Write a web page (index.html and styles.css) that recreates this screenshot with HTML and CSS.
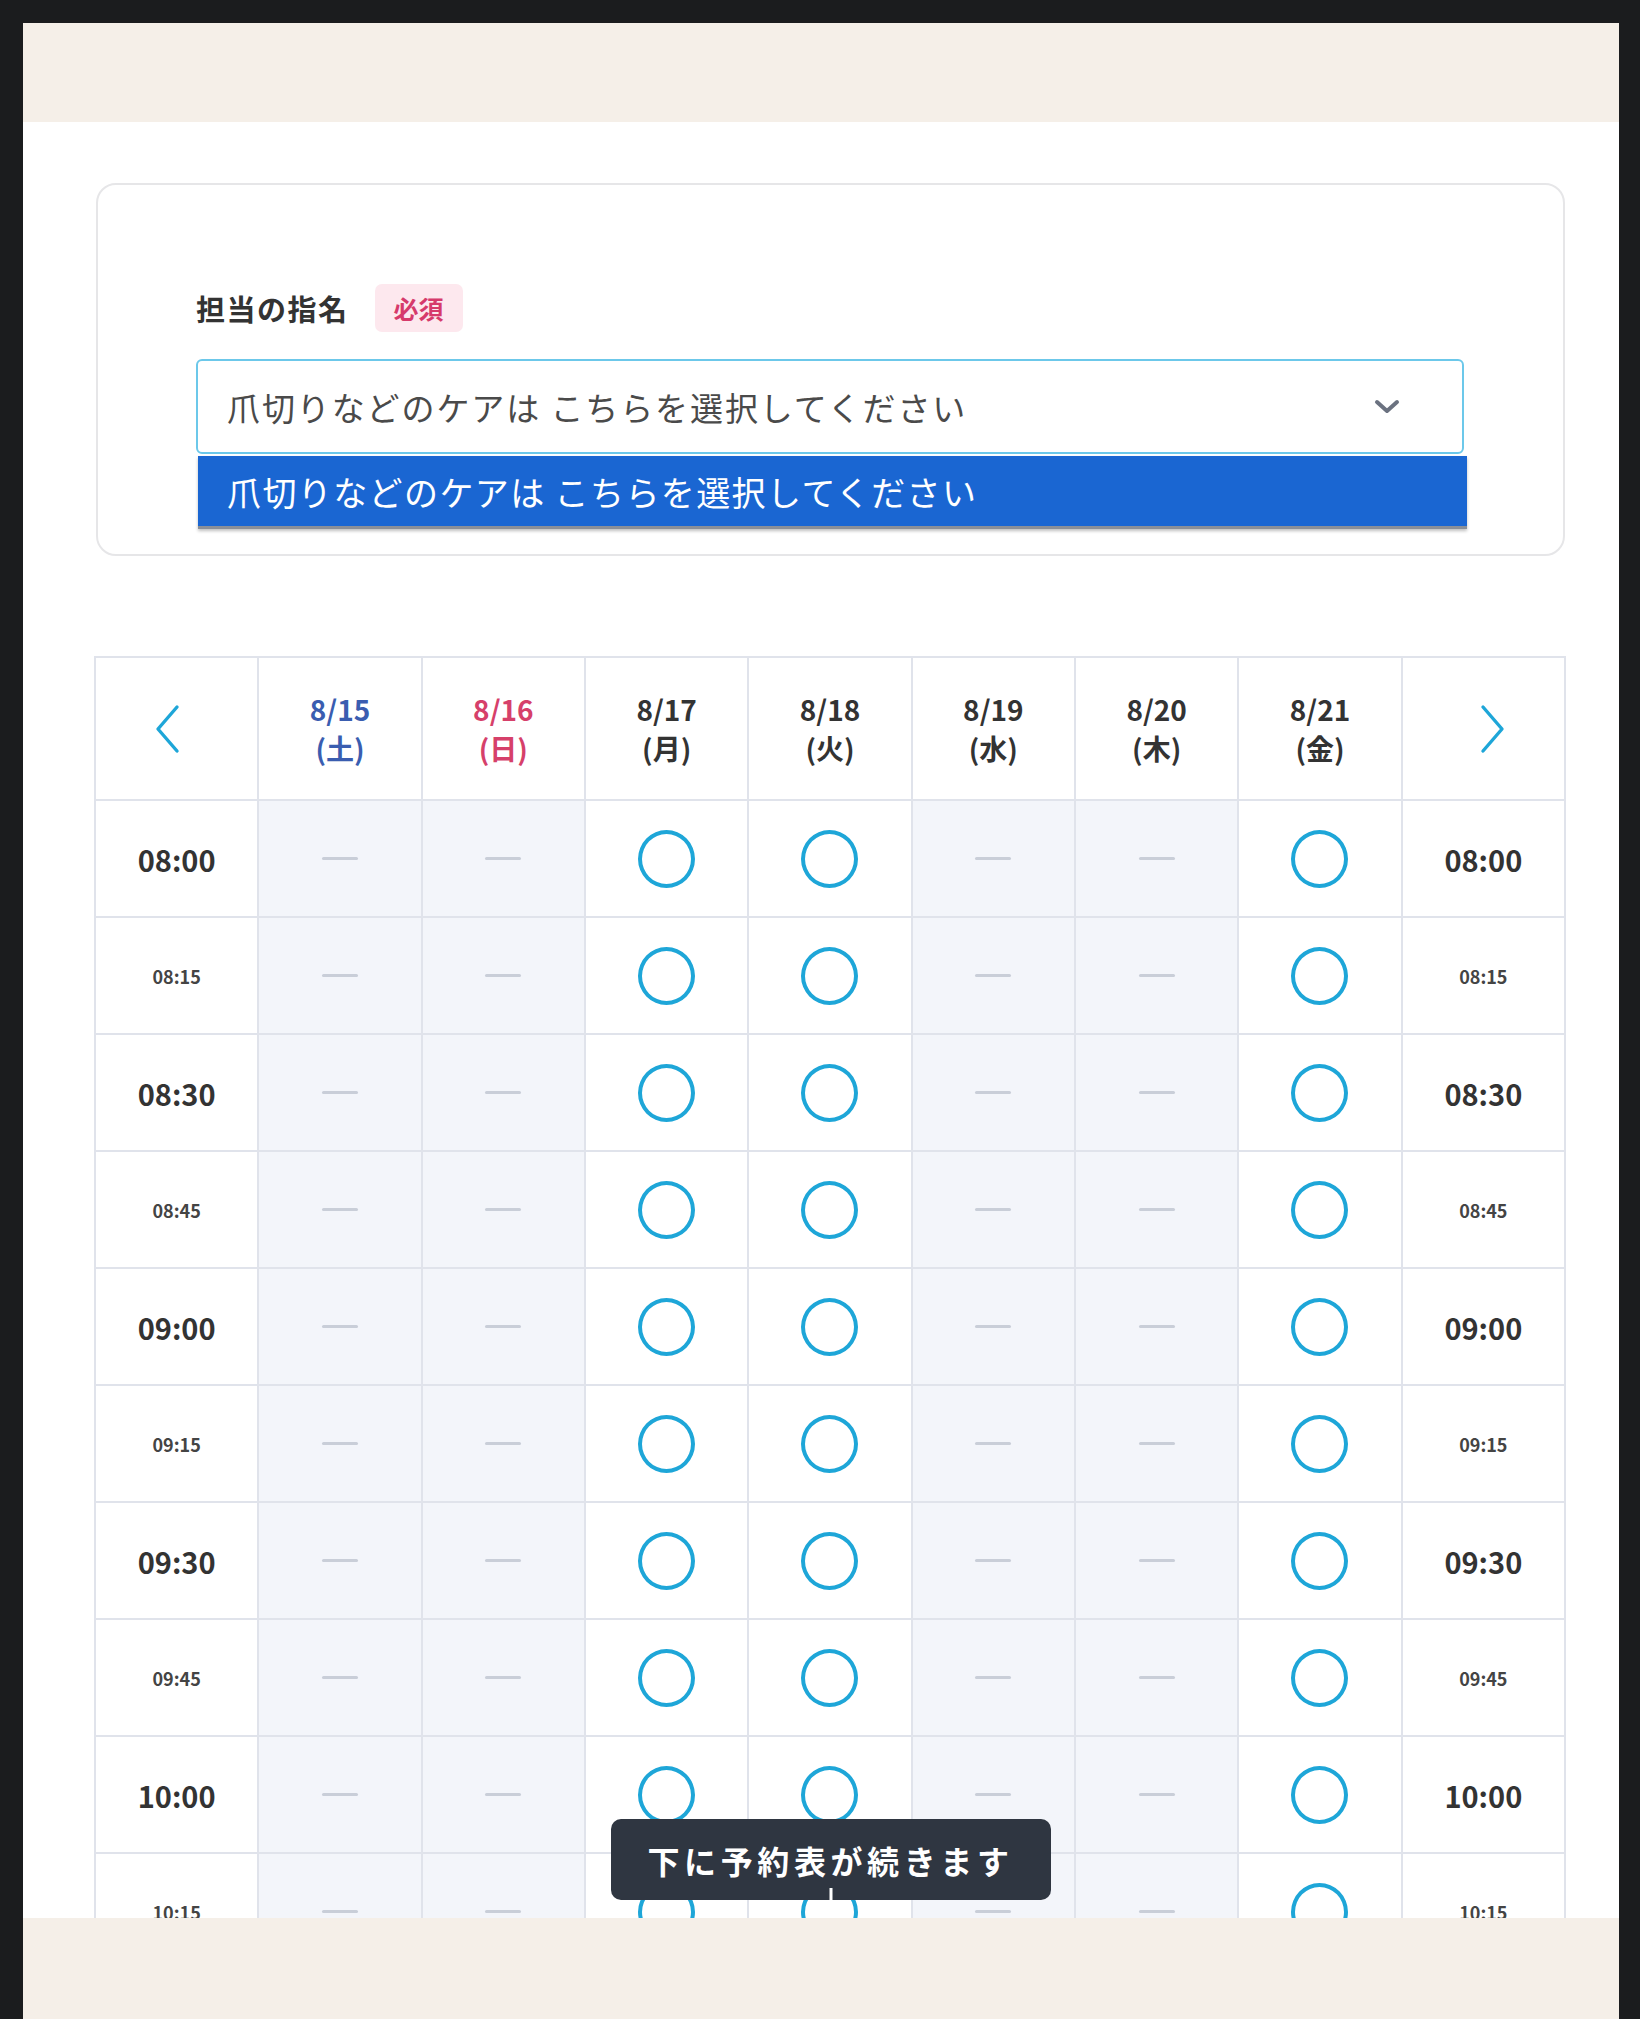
FILE: index.html
```html
<!DOCTYPE html>
<html lang="ja">
<head>
<meta charset="utf-8">
<title>予約</title>
<link rel="stylesheet" href="styles.css">
</head>
<body>
<div class="frame">
  <div class="topbar"></div>
  <div class="main">
    <section class="card">
      <div class="field-label">
        <span class="label-text">担当の指名</span>
        <span class="badge">必須</span>
      </div>
      <div class="select">
        <span class="select-text">爪切りなどのケアは こちらを選択してください</span>
        <svg class="chevron" viewBox="0 0 28 16" width="28" height="16"><polyline points="4,3 14,12 24,3" fill="none" stroke="#6b7280" stroke-width="4" stroke-linecap="round" stroke-linejoin="round"/></svg>
      </div>
      <div class="dropdown">
        <div class="option">爪切りなどのケアは こちらを選択してください</div>
      </div>
    </section>

    <div class="table-wrap">
      <div class="grid" id="grid">
        <div class="hcell nav nav-left"><svg viewBox="0 0 28 50" width="28" height="50"><polyline points="24,3 5,25 24,47" fill="none" stroke="#1ea6d8" stroke-width="3.4" stroke-linecap="round" stroke-linejoin="round"/></svg></div>
        <div class="hcell sat"><span>8/15</span><span>(土)</span></div>
        <div class="hcell sun"><span>8/16</span><span>(日)</span></div>
        <div class="hcell"><span>8/17</span><span>(月)</span></div>
        <div class="hcell"><span>8/18</span><span>(火)</span></div>
        <div class="hcell"><span>8/19</span><span>(水)</span></div>
        <div class="hcell"><span>8/20</span><span>(木)</span></div>
        <div class="hcell"><span>8/21</span><span>(金)</span></div>
        <div class="hcell nav nav-right"><svg viewBox="0 0 28 50" width="28" height="50"><polyline points="4,3 23,25 4,47" fill="none" stroke="#1ea6d8" stroke-width="3.4" stroke-linecap="round" stroke-linejoin="round"/></svg></div>
      </div>
    </div>

    <div class="tip-wrap">
      <div class="tooltip">下に予約表が続きます<span class="tip-tick"></span></div>
    </div>
  </div>
  <div class="footer"></div>
</div>
<script src="script.js"></script>
</body>
</html>
```

FILE: script.js
```js
(function () {
  var grid = document.getElementById('grid');
  var times = ['08:00','08:15','08:30','08:45','09:00','09:15','09:30','09:45','10:00','10:15','10:30'];
  var open = [false, false, true, true, false, false, true];
  times.forEach(function (t) {
    var major = t.slice(3) === '00' || t.slice(3) === '30';
    var html = '<div class="tcell ' + (major ? 'major' : 'minor') + '">' + t + '</div>';
    open.forEach(function (o) {
      html += o ? '<div class="cell ok"><span class="ring"></span></div>'
                : '<div class="cell ng"><span class="dash"></span></div>';
    });
    html += '<div class="tcell ' + (major ? 'major' : 'minor') + '">' + t + '</div>';
    grid.insertAdjacentHTML('beforeend', html);
  });
})();
```

FILE: styles.css
```css
* { box-sizing: border-box; }
html, body {
  margin: 0;
  padding: 0;
  background: #1b1c1e;
}
body {
  font-family: "Noto Sans CJK JP", "Noto Sans", sans-serif;
  color: #333;
}
.frame {
  width: 1640px;
  height: 2019px;
  padding: 23px 21px 0 23px;
  display: flex;
  flex-direction: column;
}
.topbar {
  height: 99px;
  background: #f5efe8;
  flex: none;
}
.main {
  position: relative;
  height: 1796px;
  background: #fff;
  overflow: hidden;
  padding: 61px 54px 0 73px;
  flex: none;
}
.footer {
  flex: 1;
  background: #f5efe8;
}

/* card */
.card {
  width: 1469px;
  border: 2px solid #e6e6e8;
  border-radius: 20px;
  padding: 99px 99px 25px 98px;
}
.field-label {
  display: flex;
  align-items: center;
  gap: 26px;
  height: 48px;
  margin-bottom: 27px;
}
.label-text {
  font-size: 29px;
  font-weight: 700;
  color: #333;
  letter-spacing: 1.5px;
}
.badge {
  width: 88px;
  height: 48px;
  border-radius: 7px;
  background: #fde8ee;
  color: #d63a6b;
  font-size: 25px;
  font-weight: 700;
  display: flex;
  align-items: center;
  justify-content: center;
}
.select {
  height: 95px;
  border: 2px solid #6cc8ea;
  border-radius: 6px;
  display: flex;
  align-items: center;
  justify-content: space-between;
  padding: 0 61px 0 29px;
}
.select-text {
  font-size: 33px;
  color: #4a4a4a;
  letter-spacing: 1.9px;
}
.chevron { display: block; }
.dropdown {
  margin: 2px -3px 0 2px;
  height: 73px;
  background: #1a66d2;
  border-bottom: 3px solid #8a8f98;
  box-shadow: 0 2px 3px rgba(0,0,0,0.25);
  display: flex;
  align-items: center;
  padding-left: 29px;
}
.option {
  color: #fff;
  font-size: 34px;
  letter-spacing: 1.4px;
}

/* table */
.table-wrap {
  margin-top: 100px;
  width: 1472px;
  margin-left: -2px;
}
.grid {
  display: grid;
  grid-template-columns: repeat(9, 1fr);
  grid-auto-rows: 115px;
  grid-template-rows: 141px;
  gap: 2px;
  padding: 2px;
  background: #e0e3eb;
}
.hcell {
  background: #fff;
  display: flex;
  flex-direction: column;
  align-items: center;
  justify-content: center;
  font-size: 28px;
  font-weight: 700;
  line-height: 39px;
  color: #333;
}
.hcell.sat { color: #3a5db0; }
.hcell.sun { color: #d6406a; }
.nav-left { padding-right: 20px; }
.nav-right { padding-left: 20px; }
.tcell {
  background: #fff;
  display: flex;
  align-items: center;
  justify-content: center;
  font-weight: 700;
  color: #333;
}
.tcell.major { font-size: 29px; }
.tcell.minor { font-size: 18px; color: #444; }
.cell {
  display: flex;
  align-items: center;
  justify-content: center;
}
.cell.ok { background: #fff; }
.cell.ng { background: #f3f5fa; }
.ring {
  width: 57px;
  height: 58px;
  border: 4px solid #1ea6d8;
  border-radius: 50%;
}
.dash {
  width: 36px;
  height: 3px;
  background: #c9ced8;
  border-radius: 2px;
}

/* tooltip */
.tip-wrap {
  position: absolute;
  left: 73px;
  right: 54px;
  bottom: 18px;
  display: flex;
  justify-content: center;
}
.tooltip {
  position: relative;
  width: 440px;
  height: 81px;
  background: #2f3641;
  border-radius: 10px;
  color: #fff;
  font-size: 32px;
  font-weight: 700;
  letter-spacing: 4.6px;
  display: flex;
  align-items: center;
  justify-content: center;
}
.tip-tick {
  position: absolute;
  left: 50%;
  bottom: 0;
  width: 3px;
  height: 12px;
  background: #fff;
  transform: translateX(-50%);
}
```
